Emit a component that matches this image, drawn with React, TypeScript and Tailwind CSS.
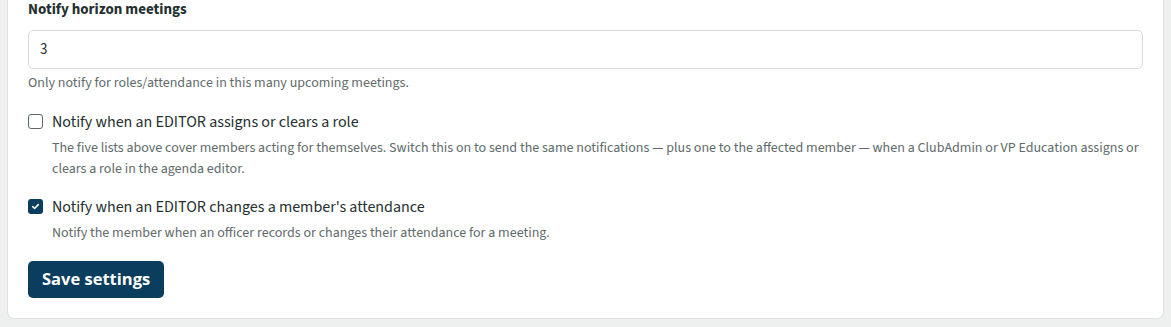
import { useState } from "react";

function CheckOption({
  checked,
  onToggle,
  label,
  children
}: {
  checked: boolean;
  onToggle: () => void;
  label: string;
  children: React.ReactNode;
}) {
  return (
    <div className="flex gap-[9px]">
      <button
        type="button"
        role="checkbox"
        aria-checked={checked}
        onClick={onToggle}
        className={
          checked
            ? "mt-[4px] flex h-[15px] w-[15px] shrink-0 items-center justify-center rounded-[3px] bg-[#0b3d5e]"
            : "mt-[4px] flex h-[15px] w-[15px] shrink-0 items-center justify-center rounded-[3px] border border-[#5d6868] bg-white"
        }
      >
        {checked ? (
          <svg viewBox="0 0 12 12" className="h-[9px] w-[9px]" fill="none">
            <path d="M2.3 6.2 4.8 8.6 9.7 3.5" stroke="white" strokeWidth="2.1" strokeLinecap="round" strokeLinejoin="round" />
          </svg>
        ) : null}
      </button>
      <div className="min-w-0">
        <p className="text-[16px] leading-[24px] text-[#253030]">{label}</p>
        <p className="mt-[4px] text-[14px] leading-[21px] text-[#5f6b6b]">{children}</p>
      </div>
    </div>
  );
}

export default function App() {
  const [horizon, setHorizon] = useState("3");
  const [editorRole, setEditorRole] = useState(false);
  const [editorAttendance, setEditorAttendance] = useState(true);

  return (
    <div className="min-h-[327px] bg-[#eef0ef] px-[7px] pb-[8px] font-['Source_Sans_3','Lato',sans-serif]">
      <div className="rounded-b-[7px] border border-t-0 border-[#dde1e0] bg-white px-[20px] pb-[20px] pt-[1px]">
        <label className="block text-[15px] font-bold leading-[18px] text-[#253030]" htmlFor="horizon">
          Notify horizon meetings
        </label>
        <input
          id="horizon"
          value={horizon}
          onChange={(event) => setHorizon(event.target.value)}
          className="mt-[11px] block h-[39px] w-full rounded-[5px] border border-[#d6dbdb] px-[11px] text-[15px] text-[#253030] outline-none"
        />
        <p className="mt-[4px] text-[14px] leading-[20px] text-[#5f6b6b]">
          Only notify for roles/attendance in this many upcoming meetings.
        </p>

        <div className="mt-[17px] flex flex-col gap-[15px]">
          <CheckOption
            checked={editorRole}
            onToggle={() => setEditorRole(!editorRole)}
            label="Notify when an EDITOR assigns or clears a role"
          >
            The five lists above cover members acting for themselves. Switch this on to send the same notifications — plus one to
            the affected member — when a ClubAdmin or VP Education assigns or clears a role in the agenda editor.
          </CheckOption>
          <CheckOption
            checked={editorAttendance}
            onToggle={() => setEditorAttendance(!editorAttendance)}
            label="Notify when an EDITOR changes a member's attendance"
          >
            Notify the member when an officer records or changes their attendance for a meeting.
          </CheckOption>
        </div>

        <button
          type="button"
          className="mt-[17px] h-[37px] rounded-[5px] bg-[#0b3d5e] px-[14px] font-['Open_Sans',sans-serif] text-[16.5px] font-bold text-white"
        >
          Save settings
        </button>
      </div>
    </div>
  );
}
